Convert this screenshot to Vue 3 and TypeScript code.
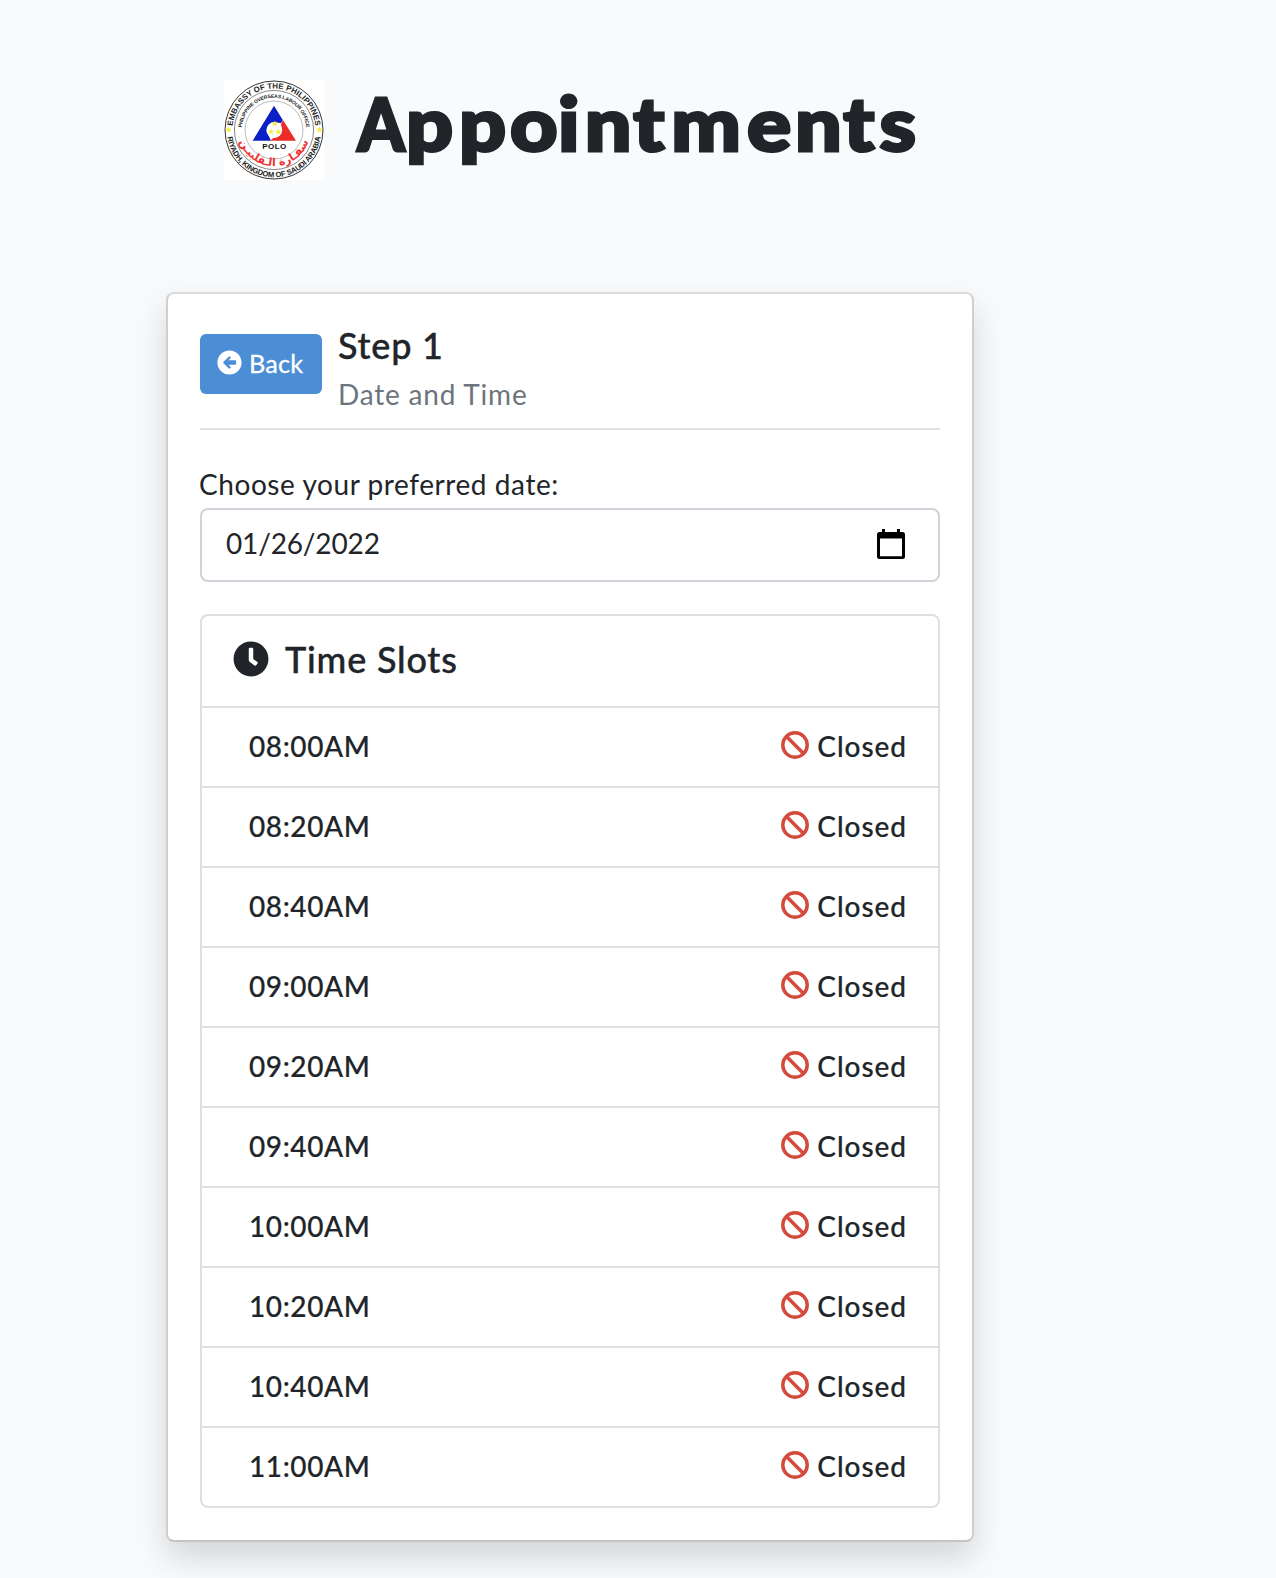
<script setup lang="ts">
const slots: string[] = [
  '08:00AM', '08:20AM', '08:40AM', '09:00AM', '09:20AM',
  '09:40AM', '10:00AM', '10:20AM', '10:40AM', '11:00AM',
]
</script>

<template>
  <main class="page">
    <header class="brand">
      <svg class="seal" viewBox="0 0 100 100" role="img" aria-label="POLO seal">
        <defs>
          <path id="outerTop" d="M8.500 50A41.500 41.500 0 0 1 91.500 50" />
          <path id="outerBottom" d="M2.800 50A47.200 47.200 0 0 0 97.200 50" />
          <path id="innerTop" d="M17.800 50A32.200 32.200 0 0 1 82.200 50" />
          <path id="arabicArc" d="M13.500 49.500A36.500 36.500 0 0 0 86.500 49.500" />
        </defs>
        <rect width="100" height="100" fill="#fff" />
        <circle cx="50" cy="50" r="49" fill="none" stroke="#333" stroke-width="1" />
        <circle cx="50" cy="50" r="39.600" fill="none" stroke="#555" stroke-width=".7" />
        <circle cx="50" cy="50" r="29" fill="none" stroke="#777" stroke-width=".5" />
        <text class="ring" font-size="7.800"><textPath href="#outerTop" startOffset="50%" text-anchor="middle" textLength="122">EMBASSY OF THE PHILIPPINES</textPath></text>
        <text class="ring" font-size="7.600"><textPath href="#outerBottom" startOffset="50%" text-anchor="middle" textLength="134">RIYADH, KINGDOM OF SAUDI ARABIA</textPath></text>
        <text class="ring" font-size="5"><textPath href="#innerTop" startOffset="50%" text-anchor="middle" textLength="96">PHILIPPINE OVERSEAS LABOUR OFFICE</textPath></text>
        <path d="M50 25.700L28.700 60.700H47L42.500 51L49 42.500L57 43L58.800 40Z" fill="#0b1fc4" />
        <path d="M59 40L72 60.700H46L58 51L57 44Z" fill="#ee2b2b" />
        <circle cx="50.300" cy="50" r="7.900" fill="#fff" />
        <g fill="#f7ec3c">
          <path id="star" d="M4.500 46.500l.9 2.200 2.400.1-1.900 1.500.7 2.300-2.100-1.300-2.100 1.300.7-2.300-1.900-1.500 2.400-.1z" />
          <use href="#star" x="91" />
          <use href="#star" x="46.400" y="-6" />
          <use href="#star" x="42.500" y="2" />
          <use href="#star" x="50" y="2" />
        </g>
        <text class="polo" x="50.300" y="69.300" text-anchor="middle" textLength="24">POLO</text>
        <text class="arabic"><textPath href="#arabicArc" startOffset="50%" text-anchor="middle">سفـارة الـفلبيـن</textPath></text>
      </svg>
      <h1 class="title">
        <svg width="590" height="100" viewBox="0 0 590 100" aria-label="Appointments">
          <text class="initial" transform="scale(.92 1)" x="1.500" y="70.500">A</text><text transform="scale(1.1 1)" x="45.500 93.600 140 183.600 208 252 286.500 355.500 399 443 476" y="70.500">ppointments</text>
        </svg>
      </h1>
    </header>

    <section class="card">
      <div class="step">
        <button class="back" type="button">
          <svg width="25" height="25" viewBox="0 0 512 512"><path fill="currentColor" d="M256 504C119 504 8 393 8 256S119 8 256 8s248 111 248 248-111 248-248 248zM273 375c12-10 13-23 2-35L235 302H370q22 0 22-22v-46q0-22-22-22H235l40-38c11-12 10-25-2-35-11-10-24-10-34 0L134 240q-15 16 0 33L239 375c10 10 23 10 34 0z" fill-rule="evenodd" /></svg>
          <span>Back</span>
        </button>
        <div class="step-text">
          <h2>Step 1</h2>
          <p>Date and Time</p>
        </div>
      </div>

      <label class="date-label" for="date">Choose your preferred date:</label>
      <div id="date" class="date-input">
        <span>01/26/2022</span>
        <svg width="28" height="31" viewBox="0 0 28 31"><path d="M5 0h3v3h12V0h3v3h2.500A2.500 2.500 0 0 1 28 5.500v22a2.500 2.500 0 0 1-2.500 2.500h-23A2.500 2.500 0 0 1 0 27.500v-22A2.500 2.500 0 0 1 2.500 3H5zM3 9.500V27.300H25V9.500z" fill-rule="evenodd" /></svg>
      </div>

      <div class="slots">
        <div class="slots-head">
          <svg width="36" height="36" viewBox="0 0 512 512"><path fill="currentColor" d="M256 8C119 8 8 119 8 256s111 248 248 248 248-111 248-248S393 8 256 8zm92.500 313l-20 25a16 16 0 0 1-22.500 2.500l-67-49.700a40 40 0 0 1-15-31.200V112a16 16 0 0 1 16-16h32a16 16 0 0 1 16 16v144l58 42.500a16 16 0 0 1 2.500 22.500z" /></svg>
          <h3>Time Slots</h3>
        </div>
        <div v-for="slot in slots" :key="slot" class="slot">
          <span class="time">{{ slot }}</span>
          <span class="status">
            <svg width="28" height="28" viewBox="0 0 28 28"><g fill="none" stroke="#d44a3c" stroke-width="3.500"><circle cx="14" cy="14" r="12.200" /><path d="M5.500 5.500l17 17" /></g></svg>
            <span class="closed">Closed</span>
          </span>
        </div>
      </div>
    </section>
  </main>
</template>

<style>
body {
  margin: 0;
  background: #f8fafc;
}
</style>

<style scoped>
.page {
  box-sizing: border-box;
  height: 1578px;
  overflow: hidden;
  padding: 80px 302px 0 166px;
  color: #212529;
  background: #f8fafc;
  font-family: Lato, "Noto Sans", sans-serif;
  font-size: 28px;
}
h1, h2, h3, p {
  margin: 0;
}
.brand {
  display: flex;
  height: 212px;
  padding-left: 58px;
  gap: 32px;
}
.seal {
  width: 100px;
  height: 100px;
}
.ring {
  font-family: "Liberation Sans", sans-serif;
  font-weight: 700;
  fill: #222;
}
.polo {
  font: 700 8px "Liberation Sans", sans-serif;
  fill: #111;
}
.arabic {
  font: 700 11px "DejaVu Sans", sans-serif;
  fill: #e33;
}
.title svg {
  display: block;
  overflow: visible;
}
.title text {
  font-family: Lato, sans-serif;
  font-weight: 900;
  font-size: 75px;
  fill: #212529;
  stroke: #212529;
  stroke-width: 3px;
}
.title .initial {
  font-size: 73px;
}
.card {
  box-sizing: border-box;
  width: 808px;
  height: 1250px;
  padding: 32px;
  background: #fff;
  border: 2px solid;
  border-color: #d9dadb #cecfd0 #c3c4c4;
  border-radius: 8px;
  box-shadow: 0 16px 32px rgba(0, 0, 0, .15);
}
.step {
  box-sizing: border-box;
  display: flex;
  height: 104px;
  padding-top: 8px;
  gap: 16px;
  border-bottom: 2px solid #dee2e6;
}
.back {
  display: flex;
  align-items: center;
  gap: 7px;
  box-sizing: border-box;
  width: 122px;
  height: 60px;
  padding: 0 0 3px 17px;
  border: 0;
  border-radius: 6px;
  color: #fff;
  background: #4b8ed6;
  font: 25.200px Lato, sans-serif;
  letter-spacing: .2px;
  -webkit-text-stroke: .3px;
}
h2, h3 {
  font-size: 36px;
  font-weight: 500;
  line-height: 44px;
  letter-spacing: .8px;
  -webkit-text-stroke: .4px;
}
.step-text h2 {
  margin-top: -11px;
}
.step-text p {
  margin-top: 7px;
  line-height: 40px;
  letter-spacing: .8px;
  color: #6c757d;
}
.date-label {
  display: block;
  margin: 34px 0 0 -1px;
  height: 44px;
  line-height: 40px;
  letter-spacing: .57px;
}
.date-input {
  box-sizing: border-box;
  display: flex;
  align-items: center;
  justify-content: space-between;
  height: 74px;
  padding: 0 33px 2px 24px;
  border: 2px solid #ced4da;
  border-radius: 8px;
}
.date-input span {
  padding-bottom: 2px;
  letter-spacing: -.15px;
}
.slots {
  margin-top: 32px;
  border: 2px solid #dfdfdf;
  border-radius: 8px;
}
.slots-head {
  display: flex;
  align-items: center;
  box-sizing: border-box;
  height: 90px;
  gap: 16px;
  padding: 0 31px 4px;
}
.slots-head svg {
  margin-bottom: 1px;
}
.slot {
  box-sizing: border-box;
  display: flex;
  align-items: center;
  justify-content: space-between;
  height: 80px;
  padding: 0 31px 3px 47px;
  border-top: 2px solid #dfdfdf;
  font-weight: 500;
  -webkit-text-stroke: .2px;
}
.time {
  letter-spacing: .6px;
}
.status {
  display: flex;
  align-items: center;
  gap: 8px;
  letter-spacing: .95px;
}
.status svg {
  margin-bottom: 1px;
}
</style>
